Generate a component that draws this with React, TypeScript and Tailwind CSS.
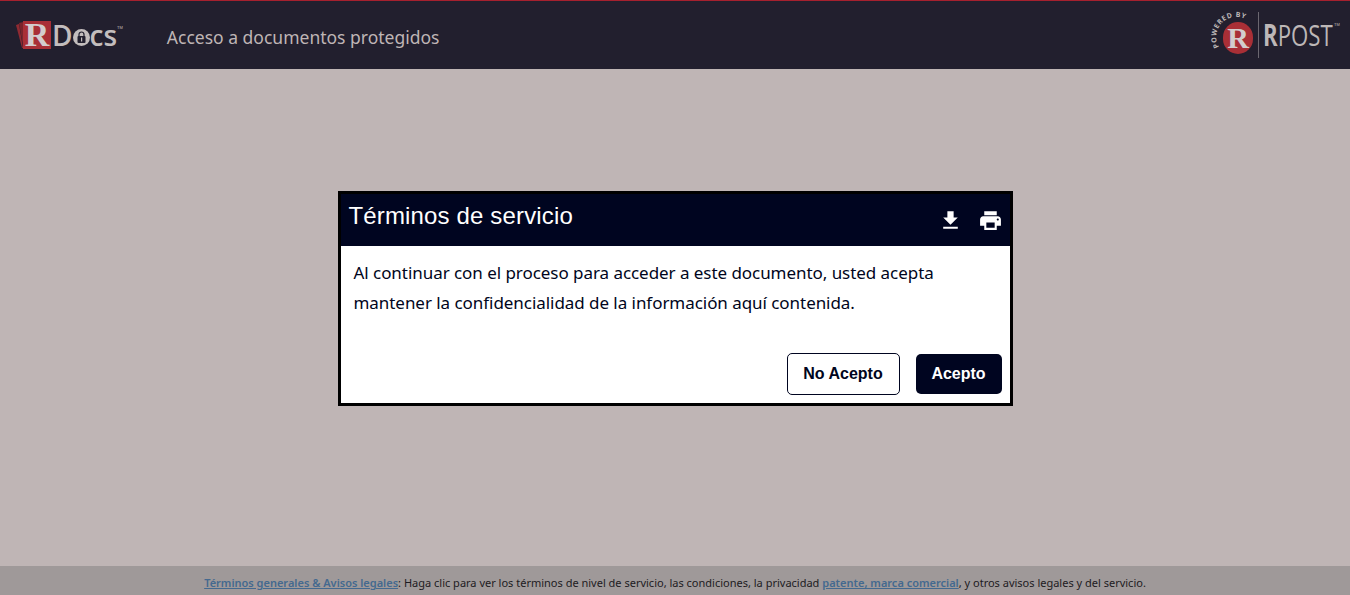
function RDocsLogo() {
  return (
    <div className="flex items-center">
      <svg width="7" height="26" viewBox="0 0 7 26">
        <path d="M0 3 L3 2 L7 26 L6 26 Z" fill="#8f2a32" />
        <path d="M3 1 L7 0 L7 24 Z" fill="#7a242c" />
      </svg>
      <div className="flex h-[28px] w-[28px] items-center justify-center bg-[#a92f36] font-['Liberation_Serif',serif] text-[34px] leading-none font-bold text-[#d3cdcd]">
        R
      </div>
      <div className="ml-px flex items-center font-['Open_Sans',sans-serif] text-[28px] leading-none font-semibold text-[#c3bdbd]">
        <span>D</span>
        <span className="mt-[4px] flex h-[17px] w-[17px] items-center justify-center rounded-full bg-[#c3bdbd]">
          <svg width="9" height="12" viewBox="0 0 9 12">
            <path d="M2 6 V3.5 a2.5 2.5 0 0 1 5 0 V6" fill="none" stroke="#221f2e" strokeWidth="1.2" />
            <rect x="0.5" y="5" width="8" height="7" rx="1" fill="#221f2e" />
            <rect x="4" y="6.5" width="1.2" height="4" fill="#c3bdbd" />
          </svg>
        </span>
        <span>cs</span>
      </div>
      <span className="mb-[14px] font-['Liberation_Sans',sans-serif] text-[4px] leading-none text-[#c3bdbd]">TM</span>
    </div>
  )
}

function RPostLogo() {
  return (
    <div className="flex items-center">
      <div className="relative h-[46px] w-[44px]">
        <svg width="44" height="46" viewBox="0 0 44 46" className="absolute inset-0 overflow-visible">
          <defs>
            <path id="poweredArc" d="M10 35 A20 20 0 0 1 38 8" fill="none" />
          </defs>
          <text fontFamily="'Open Sans', sans-serif" fontSize="7" fontWeight="700" fill="#bdb7b7" letterSpacing="0.6">
            <textPath href="#poweredArc">POWERED BY</textPath>
          </text>
        </svg>
        <div className="absolute top-[10px] left-[14px] flex h-[32px] w-[30px] items-center justify-center rounded-full bg-[#a92f36] font-['Liberation_Serif',serif] text-[30px] leading-none font-bold text-[#d3cdcd]">
          R
        </div>
      </div>
      <div className="ml-[5px] h-[46px] w-px bg-[#6b6770]" />
      <div className="ml-[4px] flex w-[79px] items-start font-['Open_Sans',sans-serif] text-[#bdb7b7]">
        <span className="inline-block w-[70px] origin-left scale-x-[0.74] text-[30px] leading-none whitespace-nowrap">
          <span className="font-bold">R</span>POST
        </span>
        <span className="mt-[3px] ml-[1px] font-['Liberation_Sans',sans-serif] text-[4px] leading-none">TM</span>
      </div>
    </div>
  )
}

export default function App() {
  return (
    <div className="flex h-screen flex-col overflow-hidden bg-[#bfb5b5]">
      <header className="flex h-[69px] items-center justify-between border-t border-[#a6202e] bg-[#221f2e] pr-[8px] pl-[16px]">
        <div className="flex items-center">
          <RDocsLogo />
          <span className="mt-[5px] ml-[44px] font-['Noto_Sans',sans-serif] text-[17.5px] text-[#bfb5b5]">
            Acceso a documentos protegidos
          </span>
        </div>
        <RPostLogo />
      </header>

      <main className="flex flex-1 justify-center pt-[122px]">
        <div className="h-[215px] w-[675px] border-[3px] border-black bg-white">
          <div className="flex h-[52px] items-center justify-between bg-[#000520] pr-[7px] pl-[8px] text-white">
            <h1 className="mb-[8px] font-['Liberation_Sans',sans-serif] text-[24px] leading-none tracking-[0.15px]">Términos de servicio</h1>
            <div className="flex items-center gap-[15px]">
              <svg width="25" height="25" viewBox="0 0 24 24" fill="currentColor">
                <path d="M19 9h-4V3H9v6H5l7 7 7-7zM5 18v2h14v-2H5z" />
              </svg>
              <svg width="25" height="25" viewBox="0 0 24 24" fill="currentColor">
                <path d="M19 8H5c-1.66 0-3 1.34-3 3v6h4v4h12v-4h4v-6c0-1.66-1.34-3-3-3zm-3 11H8v-5h8v5zm3-7c-.55 0-1-.45-1-1s.45-1 1-1 1 .45 1 1-.45 1-1 1zm-1-9H6v4h12V3z" />
              </svg>
            </div>
          </div>
          <div className="px-[13px] pt-[12px] font-['Noto_Sans',sans-serif] text-[17px] leading-[29.5px] tracking-[-0.05px] text-[#000520]">
            <p>Al continuar con el proceso para acceder a este documento, usted acepta</p>
            <p>mantener la confidencialidad de la información aquí contenida.</p>
          </div>
          <div className="mt-[36px] flex items-center justify-end gap-[16px] pr-[8px] font-['Liberation_Sans',sans-serif] text-[16px] font-bold">
            <button className="h-[42px] w-[113px] rounded-[5px] border border-[#000520] bg-white text-[#000520]">No Acepto</button>
            <button className="h-[40px] w-[86px] rounded-[5px] bg-[#000520] text-white">Acepto</button>
          </div>
        </div>
      </main>

      <footer className="flex h-[29px] items-center justify-center bg-[#9f9999] pt-[6px] font-['Noto_Sans',sans-serif] text-[11px] text-[#1d1b22]">
        <p>
          <a className="font-semibold text-[#44698f] underline">Términos generales &amp; Avisos legales</a>
          : Haga clic para ver los términos de nivel de servicio, las condiciones, la privacidad{' '}
          <a className="font-semibold text-[#44698f] underline">patente, marca comercial</a>
          , y otros avisos legales y del servicio.
        </p>
      </footer>
    </div>
  )
}
